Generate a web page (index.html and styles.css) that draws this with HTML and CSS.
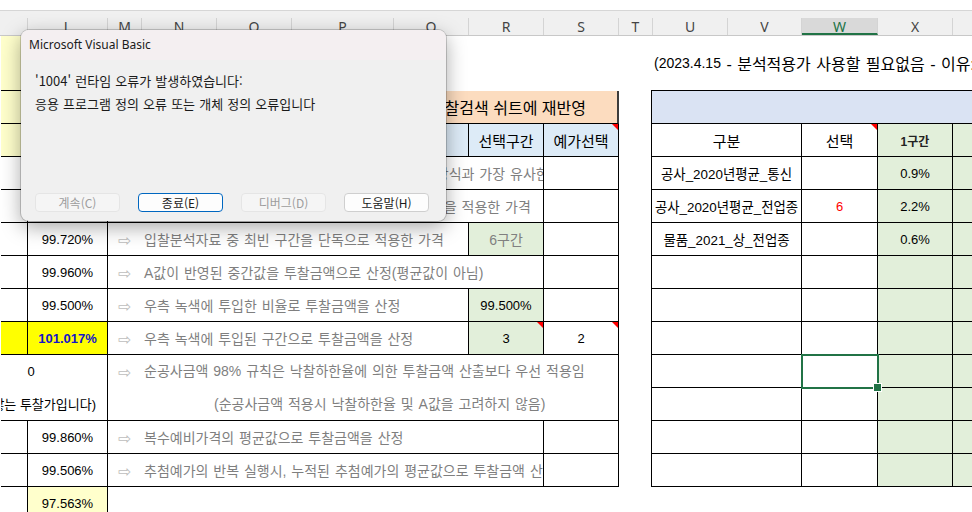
FILE: index.html
```html
<!DOCTYPE html>
<html lang="ko">
<head>
    <meta charset="UTF-8">
    <meta name="viewport" content="width=device-width, initial-scale=1.0">
    <title>입찰분석 - Excel</title>
    <link rel="stylesheet" href="styles.css">
</head>
<body>
    <div class="top-strip"></div>

    <!-- Column letters -->
    <div class="col-bar">
        <div class="col w-k"></div>
        <div class="col w-l">L</div>
        <div class="col w-m">M</div>
        <div class="col w-n">N</div>
        <div class="col w-o">O</div>
        <div class="col w-p">P</div>
        <div class="col w-q">Q</div>
        <div class="col w-r">R</div>
        <div class="col w-s">S</div>
        <div class="col w-t">T</div>
        <div class="col w-u">U</div>
        <div class="col w-v">V</div>
        <div class="col w-w active">W</div>
        <div class="col w-x">X</div>
        <div class="col w-y">Y</div>
    </div>

    <div class="sheet">
        <!-- Left block: bid price methods -->
        <div class="left-grid">
            <div class="cell bd yl"></div>
            <div class="cell s8"></div>

            <div class="cell bd yl"></div>
            <div class="cell bd"></div>
            <div class="cell s7 push-btn">분석결과를 입찰검색 쉬트에 재반영</div>

            <div class="cell bd yl"></div>
            <div class="cell bd s6 hd">입찰가 산정 방식</div>
            <div class="cell bd hd">선택구간</div>
            <div class="cell bd hd note">예가선택</div>

            <div class="cell bd"></div>
            <div class="cell bd">99.780%</div>
            <div class="cell bd s6 desc"><span class="arw">⇨</span><span class="txt">입찰분석자료 중 최근의 투찰율 분포가 실제 낙찰 방식과 가장 유사한 가격</span></div>
            <div class="cell bd"></div>

            <div class="cell bd"></div>
            <div class="cell bd">99.650%</div>
            <div class="cell bd s6 desc"><span class="arw">⇨</span><span class="txt">입찰분석자료 중 구간에서 가장 많이 낙찰된 투찰율을 적용한 가격</span></div>
            <div class="cell bd"></div>

            <div class="cell bd"></div>
            <div class="cell bd">99.720%</div>
            <div class="cell bd s5 desc"><span class="arw">⇨</span><span class="txt">입찰분석자료 중 최빈 구간을 단독으로 적용한 가격</span></div>
            <div class="cell bd gr dim">6구간</div>
            <div class="cell bd"></div>

            <div class="cell bd"></div>
            <div class="cell bd">99.960%</div>
            <div class="cell bd s6 desc"><span class="arw">⇨</span><span class="txt">A값이 반영된 중간값을 투찰금액으로 산정(평균값이 아님)</span></div>
            <div class="cell bd"></div>

            <div class="cell bd"></div>
            <div class="cell bd">99.500%</div>
            <div class="cell bd s5 desc"><span class="arw">⇨</span><span class="txt">우측 녹색에 투입한 비율로 투찰금액을 산정</span></div>
            <div class="cell bd gr">99.500%</div>
            <div class="cell bd"></div>

            <div class="cell bd yl2"></div>
            <div class="cell bd yl2 pick">101.017%</div>
            <div class="cell bd s5 desc"><span class="arw">⇨</span><span class="txt">우측 녹색에 투입된 구간으로 투찰금액을 산정</span></div>
            <div class="cell bd gr note">3</div>
            <div class="cell bd note">2</div>

            <div class="cell bd s2 r2 kl">
                <div class="ln zero">0</div>
                <div class="ln tail">(순공사금액 0이면 적용하지 않는 투찰가입니다)</div>
            </div>
            <div class="cell bd s7 r2 desc2">
                <div class="ln"><span class="arw">⇨</span><span class="txt">순공사금액 98% 규칙은 낙찰하한율에 의한 투찰금액 산출보다 우선 적용임</span></div>
                <div class="ln sub">(순공사금액 적용시 낙찰하한율 및 A값을 고려하지 않음)</div>
            </div>

            <div class="cell bd"></div>
            <div class="cell bd">99.860%</div>
            <div class="cell bd s6 desc"><span class="arw">⇨</span><span class="txt">복수예비가격의 평균값으로 투찰금액을 산정</span></div>
            <div class="cell bd"></div>

            <div class="cell bd"></div>
            <div class="cell bd">99.506%</div>
            <div class="cell bd s6 desc"><span class="arw">⇨</span><span class="txt">추첨예가의 반복 실행시, 누적된 추첨예가의 평균값으로 투찰금액 산정</span></div>
            <div class="cell bd"></div>

            <div class="cell br"></div>
            <div class="cell br ly">97.563%</div>
        </div>

        <!-- Right block: section ratios -->
        <div class="right-grid">
            <div class="cell s4 caption"><span class="date">(2023.4.15</span>&nbsp;- 분석적용가 사용할 필요없음 - 이유: 입찰분석 결과로 대체)</div>
            <div class="cell s4 band"></div>

            <div class="cell bd bl hd2">구분</div>
            <div class="cell bd hd2 note">선택</div>
            <div class="cell bd gr b12">1구간</div>
            <div class="cell bd gr"></div>

            <div class="cell bd bl name">공사_2020년평균_통신</div>
            <div class="cell bd"></div>
            <div class="cell bd gr">0.9%</div>
            <div class="cell bd gr"></div>

            <div class="cell bd bl name">공사_2020년평균_전업종</div>
            <div class="cell bd red">6</div>
            <div class="cell bd gr">2.2%</div>
            <div class="cell bd gr"></div>

            <div class="cell bd bl name">물품_2021_상_전업종</div>
            <div class="cell bd"></div>
            <div class="cell bd gr">0.6%</div>
            <div class="cell bd gr"></div>

            <div class="cell bd bl"></div><div class="cell bd"></div><div class="cell bd gr"></div><div class="cell bd gr"></div>
            <div class="cell bd bl"></div><div class="cell bd"></div><div class="cell bd gr"></div><div class="cell bd gr"></div>
            <div class="cell bd bl"></div><div class="cell bd"></div><div class="cell bd gr"></div><div class="cell bd gr"></div>
            <div class="cell bd bl"></div><div class="cell bd sel"></div><div class="cell bd gr"></div><div class="cell bd gr"></div>
            <div class="cell bd bl"></div><div class="cell bd"></div><div class="cell bd gr"></div><div class="cell bd gr"></div>
            <div class="cell bd bl"></div><div class="cell bd"></div><div class="cell bd gr"></div><div class="cell bd gr"></div>
            <div class="cell bd bl"></div><div class="cell bd"></div><div class="cell bd gr"></div><div class="cell bd gr"></div>
        </div>
    </div>

    <!-- VBA runtime error dialog -->
    <div class="vba">
        <div class="vba-title">Microsoft Visual Basic</div>
        <div class="vba-body">
            <div>'1004' 런타임 오류가 발생하였습니다:</div>
            <div>응용 프로그램 정의 오류 또는 개체 정의 오류입니다</div>
        </div>
        <div class="vba-btns">
            <div class="btn off">계속(C)</div>
            <div class="btn def">종료(E)</div>
            <div class="btn off">디버그(D)</div>
            <div class="btn">도움말(H)</div>
        </div>
    </div>
</body>
</html>
```

FILE: styles.css
```css
* {
    box-sizing: border-box;
}

body {
    margin: 0;
    width: 972px;
    height: 512px;
    overflow: hidden;
    position: relative;
    background: #ffffff;
    font-family: "Liberation Sans", "Noto Sans CJK KR", sans-serif;
    color: #000000;
}

.top-strip {
    height: 10px;
    background: #ffffff;
}

/* Column letter bar */
.col-bar {
    height: 26px;
    padding-left: 1px;
    display: flex;
    align-items: flex-end;
    background: #f0f0f0;
    border-top: 1px solid #d6d6d6;
    border-bottom: 1px solid #c8c8c8;
    white-space: nowrap;
}

.col-bar .col {
    flex: none;
    height: 17px;
    border-right: 1px solid #d4d4d4;
    text-align: center;
    font: 14px/17px "Noto Sans", sans-serif;
    color: #444444;
}

.col-bar .col.active {
    background: #d9d9d9;
    border-bottom: 2px solid #217346;
    color: #217346;
}

.w-k { width: 27px; }
.w-l { width: 80px; }
.w-m { width: 34px; }
.w-n, .w-o, .w-q, .w-r, .w-s, .w-u, .w-x, .w-y { width: 75px; }
.w-p { width: 102px; }
.w-t { width: 34px; }
.w-v { width: 74px; }
.w-w { width: 76px; }

/* Sheet */
.sheet {
    display: flex;
    align-items: flex-start;
    padding-left: 1px;
}

.left-grid {
    flex: none;
    display: grid;
    grid-template-columns: 27px 80px 34px 75px 75px 102px 75px 75px 75px;
    grid-template-rows: 55px repeat(13, 33px);
}

.right-grid {
    flex: none;
    margin-left: 32px;
    display: grid;
    grid-template-columns: 151px 76px 75px 75px;
    grid-template-rows: 55px repeat(12, 33px);
}

.cell {
    display: flex;
    align-items: center;
    justify-content: center;
    font-size: 13px;
    white-space: nowrap;
    overflow: hidden;
    position: relative;
}

.bd {
    border-right: 1px solid #000000;
    border-bottom: 1px solid #000000;
}

.br {
    border-right: 1px solid #000000;
}

.bl {
    border-left: 1px solid #000000;
}

.s2 { grid-column: span 2; }
.s4 { grid-column: span 4; }
.s5 { grid-column: span 5; }
.s6 { grid-column: span 6; }
.s7 { grid-column: span 7; }
.s8 { grid-column: span 8; }
.r2 { grid-row: span 2; }

/* Fills */
.yl { background: #ffffcc; }
.ly { background: #ffffcc; }
.yl2 { background: #ffff00; }
.gr { background: #e2efda; }
.hd { background: #ddebf7; font-size: 15px; }
.hd2 { font-size: 15px; }
.name { font-size: 13.4px; }
.dim { color: #808080; font-size: 14px; }
.red { color: #ff0000; }
.b12 { font-size: 12px; font-weight: bold; color: #222222; }

.pick {
    color: #1414c8;
    font-weight: bold;
}

/* Red comment marker */
.note::after {
    content: "";
    position: absolute;
    top: 0;
    right: 0;
    border-top: 6px solid #ff0000;
    border-left: 6px solid transparent;
}

/* Macro button shape */
.push-btn {
    justify-content: flex-end;
    padding-right: 31px;
    font-size: 16px;
    background: #fcdcbf;
    border-right: 2px solid #3c3c3c;
    border-bottom: 1px solid #000000;
}

/* Description rows */
.desc {
    justify-content: flex-start;
    font-size: 14px;
    color: #7f7f7f;
    word-spacing: 1px;
}

.arw {
    flex: none;
    width: 34px;
    text-align: center;
    font-family: "DejaVu Sans", sans-serif;
    font-size: 16px;
    color: #bdbdbd;
    position: relative;
    top: 1px;
}

.txt {
    padding-left: 2px;
}

.kl, .desc2 {
    display: block;
}

.ln {
    height: 33px;
    line-height: 33px;
}

.kl .zero {
    width: 154px;
    margin-left: -47px;
    text-align: center;
}

.kl .tail {
    display: flex;
    justify-content: flex-end;
    padding-right: 11px;
}

.desc2 {
    font-size: 14px;
    color: #7f7f7f;
    word-spacing: 1px;
}

.desc2 .ln {
    display: flex;
    align-items: center;
}

.desc2 .sub {
    padding-left: 106px;
}

/* Right block */
.caption {
    justify-content: flex-start;
    padding-left: 3px;
    font-size: 16px;
    word-spacing: 1px;
    border-bottom: 1px solid #000000;
}

.caption .date {
    font-size: 14px;
}

.band {
    background: #dae3f3;
    border-left: 1px solid #000000;
    border-bottom: 1px solid #000000;
}

.sel {
    overflow: visible;
    z-index: 2;
}

.sel::before {
    content: "";
    position: absolute;
    top: -1px;
    left: -1px;
    right: -2px;
    bottom: -2px;
    border: 2px solid #217346;
}

.sel::after {
    content: "";
    position: absolute;
    right: -5px;
    bottom: -5px;
    width: 7px;
    height: 7px;
    background: #217346;
    border: 1px solid #ffffff;
}

/* VBA error dialog */
.vba {
    position: absolute;
    left: 21px;
    top: 30px;
    width: 425px;
    height: 191px;
    z-index: 10;
    background: #f0f0f0;
    border-radius: 8px;
    overflow: hidden;
    box-shadow: 0 0 0 1px rgba(0, 0, 0, 0.18), 0 6px 20px rgba(0, 0, 0, 0.35);
}

.vba-title {
    height: 30px;
    padding-left: 8px;
    background: #f4eff1;
    font: 12px/30px "Noto Sans", sans-serif;
    color: #1a1a1a;
}

.vba-body {
    height: 133px;
    padding: 9px 14px 0;
    font: 13px/23px "Noto Sans CJK KR", sans-serif;
    word-spacing: 0.5px;
    color: #1a1a1a;
}

.vba-btns {
    display: flex;
    gap: 18px;
    padding-left: 14px;
}

.btn {
    width: 85px;
    height: 19px;
    border: 1px solid #cfcfcf;
    border-radius: 4px;
    background: #fdfdfd;
    text-align: center;
    font: 12px/17px "Noto Sans CJK KR", sans-serif;
    color: #1a1a1a;
}

.btn.off {
    background: #f5f5f5;
    border-color: #e5e5e5;
    color: #9d9d9d;
}

.btn.def {
    border-color: #0067c0;
}
```
